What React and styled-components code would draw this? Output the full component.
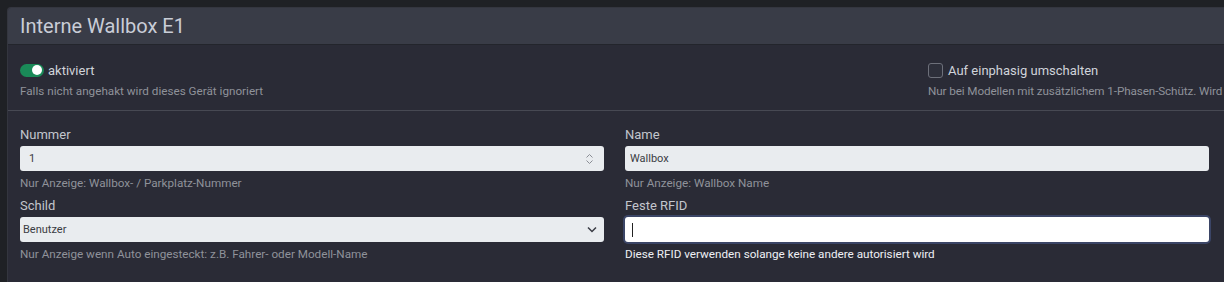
import React from 'react'
import styled, { createGlobalStyle } from 'styled-components'

const GlobalStyle = createGlobalStyle`
  html, body {
    margin: 0;
    padding: 0;
    background: #1f2125;
    overflow: hidden;
  }
  body {
    font-family: Roboto, 'Liberation Sans', Arial, sans-serif;
  }
`

const Page = styled.div`
  padding: 7px 0 0 7px;
  width: 1232px;
  height: 282px;
  box-sizing: border-box;
`

const Card = styled.section`
  background: #2a2b36;
  border: 1px solid #34363f;
  border-right: none;
  border-bottom: none;
  border-radius: 4px 0 0 0;
  height: 100%;
  overflow: hidden;
`

const CardHeader = styled.header`
  height: 36px;
  background: #393c47;
  border-bottom: 1px solid #23252c;
  display: flex;
  align-items: center;
  padding-left: 12px;
`

const Title = styled.h2`
  margin: 0;
  font-size: 20px;
  font-weight: 400;
  color: #c9cdd7;
`

const CardBody = styled.div`
  padding: 15px 0 0 12px;
`

const TopRow = styled.div`
  display: grid;
  grid-template-columns: 908px 1fr;
  width: 1210px;
`

const CheckLine = styled.label`
  display: flex;
  align-items: center;
  gap: 4px;
  height: 20px;
  font-size: 13px;
  color: #d0d3da;
  white-space: nowrap;
`

const Switch = styled.span`
  position: relative;
  width: 24px;
  height: 13px;
  border-radius: 7px;
  background: #1a8a58;
  flex-shrink: 0;

  &::after {
    content: '';
    position: absolute;
    right: 2px;
    top: 1.5px;
    width: 10px;
    height: 10px;
    border-radius: 50%;
    background: #ffffff;
  }
`

const Box = styled.span`
  width: 13px;
  height: 13px;
  border: 1px solid #6d707a;
  border-radius: 3px;
  background: #2d2f3a;
  margin-right: 1px;
  flex-shrink: 0;
`

const Help = styled.div`
  margin-top: ${(p) => (p.tight ? '3px' : '4px')};
  font-size: 11.7px;
  line-height: 16px;
  letter-spacing: ${(p) => (p.squeeze ? '-0.1px' : 'normal')};
  color: ${(p) => (p.bright ? '#eef0f4' : '#8f929a')};
  white-space: nowrap;
`

const Rule = styled.hr`
  margin: 11px 0 0 -12px;
  border: none;
  border-top: 1px solid #474953;
  width: 1300px;
`

const FieldGrid = styled.div`
  display: grid;
  grid-template-columns: 584px 584px;
  column-gap: 21px;
  padding-top: 14px;
`

const Field = styled.div`
  display: flex;
  flex-direction: column;
  margin-bottom: 5px;
`

const Label = styled.label`
  font-size: 13px;
  line-height: 20px;
  color: #c3c6cd;
  margin-bottom: 1px;
`

const InputWrap = styled.div`
  position: relative;
  height: 25px;
  border-radius: 3px;
  background: ${(p) => (p.focused ? '#ffffff' : '#e9ecef')};
  box-shadow: ${(p) => (p.focused ? '0 0 0 2px #3b4566' : 'none')};
  display: flex;
  align-items: center;
  padding: 0 0 0 ${(p) => p.indent || 6}px;
  box-sizing: border-box;
`

const Input = styled.input`
  border: none;
  outline: none;
  background: transparent;
  font-family: inherit;
  font-size: 11px;
  font-weight: 400;
  color: #3a3c43;
  flex: 1;
  padding: 0;
  caret-color: transparent;
`

const Caret = styled.span`
  position: absolute;
  left: 7px;
  top: 6px;
  width: 1px;
  height: 14px;
  background: #222;
`

const Spinner = styled.svg`
  width: 9px;
  height: 12px;
  margin-right: 10px;
`

const Chevron = styled.svg`
  width: 10px;
  height: 7px;
  margin-right: 7px;
`

export default function App() {
  return (
    <>
      <GlobalStyle />
      <Page>
        <Card>
          <CardHeader>
            <Title>Interne Wallbox E1</Title>
          </CardHeader>
          <CardBody>
            <TopRow>
              <div>
                <CheckLine>
                  <Switch />
                  aktiviert
                </CheckLine>
                <Help tight>Falls nicht angehakt wird dieses Gerät ignoriert</Help>
              </div>
              <div>
                <CheckLine>
                  <Box />
                  Auf einphasig umschalten
                </CheckLine>
                <Help tight squeeze>Nur bei Modellen mit zusätzlichem 1-Phasen-Schütz. Wird</Help>
              </div>
            </TopRow>
            <Rule />
            <FieldGrid>
              <Field>
                <Label>Nummer</Label>
                <InputWrap indent={9}>
                  <Input defaultValue="1" readOnly />
                  <Spinner viewBox="0 0 9 12">
                    <path d="M1.5 4.5 L4.5 1.5 L7.5 4.5 M1.5 7.5 L4.5 10.5 L7.5 7.5" fill="none" stroke="#8a8d94" strokeWidth="1" />
                  </Spinner>
                </InputWrap>
                <Help>Nur Anzeige: Wallbox- / Parkplatz-Nummer</Help>
              </Field>
              <Field>
                <Label>Name</Label>
                <InputWrap indent={5}>
                  <Input defaultValue="Wallbox" readOnly />
                </InputWrap>
                <Help>Nur Anzeige: Wallbox Name</Help>
              </Field>
              <Field>
                <Label>Schild</Label>
                <InputWrap indent={3}>
                  <Input defaultValue="Benutzer" readOnly />
                  <Chevron viewBox="0 0 10 7">
                    <path d="M1 1.5 L5 5.5 L9 1.5" fill="none" stroke="#3a3c44" strokeWidth="1.5" />
                  </Chevron>
                </InputWrap>
                <Help>Nur Anzeige wenn Auto eingesteckt: z.B. Fahrer- oder Modell-Name</Help>
              </Field>
              <Field>
                <Label>Feste RFID</Label>
                <InputWrap focused>
                  <Input defaultValue="" readOnly />
                  <Caret />
                </InputWrap>
                <Help bright>Diese RFID verwenden solange keine andere autorisiert wird</Help>
              </Field>
            </FieldGrid>
          </CardBody>
        </Card>
      </Page>
    </>
  )
}
